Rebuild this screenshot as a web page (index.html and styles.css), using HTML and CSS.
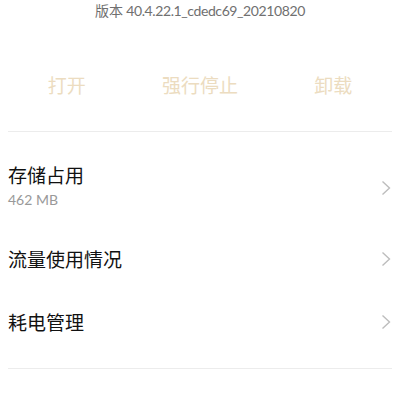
FILE: index.html
```html
<!DOCTYPE html>
<html lang="zh">
<head>
<meta charset="utf-8">
<link rel="stylesheet" href="styles.css">
</head>
<body>
<div class="page">
  <div class="version"><span class="version-label">版本</span> <span class="version-num">40.4.22.1_cdedc69_20210820</span></div>
  <div class="actions">
    <div class="action">打开</div>
    <div class="action">强行停止</div>
    <div class="action">卸载</div>
  </div>
  <div class="divider"></div>
  <div class="list">
    <div class="row row-first">
      <div class="text">
        <div class="title">存储占用</div>
        <div class="sub">462 MB</div>
      </div>
      <svg class="chev" width="10" height="16" viewBox="0 0 10 16"><polyline points="1.5,1.5 8.5,8 1.5,14.5" fill="none" stroke="#bdbdbd" stroke-width="1.4"/></svg>
    </div>
    <div class="row">
      <div class="title">流量使用情况</div>
      <svg class="chev" width="10" height="16" viewBox="0 0 10 16"><polyline points="1.5,1.5 8.5,8 1.5,14.5" fill="none" stroke="#bdbdbd" stroke-width="1.4"/></svg>
    </div>
    <div class="row">
      <div class="title">耗电管理</div>
      <svg class="chev" width="10" height="16" viewBox="0 0 10 16"><polyline points="1.5,1.5 8.5,8 1.5,14.5" fill="none" stroke="#bdbdbd" stroke-width="1.4"/></svg>
    </div>
  </div>
  <div class="divider divider-bottom"></div>
</div>
</body>
</html>
```
FILE: styles.css
```css
html, body {
  margin: 0;
  padding: 0;
  background: #ffffff;
}
body {
  font-family: "Noto Sans CJK SC", "Noto Sans", sans-serif;
  width: 400px;
  height: 400px;
  overflow: hidden;
}
.page {
  display: flex;
  flex-direction: column;
}
.version {
  text-align: center;
  font-size: 14px;
  line-height: 20px;
  color: #707070;
}
.version-num {
  font-family: "Lato", sans-serif;
  font-size: 14px;
  letter-spacing: -0.4px;
}
.actions {
  display: grid;
  grid-template-columns: 1fr 1fr 1fr;
  padding: 54px 0 36px;
}
.action {
  text-align: center;
  font-size: 19px;
  line-height: 20px;
  color: #ecdcc0;
}
.divider {
  margin: 0 8px;
  height: 1px;
  background: #ececec;
}
.divider-bottom {
  margin-top: 15px;
}
.row {
  display: flex;
  align-items: center;
  justify-content: space-between;
  height: 63px;
  padding: 0 9px 0 8px;
}
.row-first {
  height: auto;
  padding-top: 31px;
  padding-bottom: 14px;
}
.title {
  font-size: 19px;
  line-height: 24px;
  color: #111111;
}
.sub {
  font-size: 14px;
  line-height: 26px;
  color: #999999;
  font-family: "Lato", sans-serif;
}
.chev {
  display: block;
  flex: none;
}
```
